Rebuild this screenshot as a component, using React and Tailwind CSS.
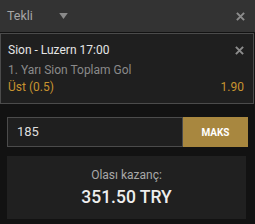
import React from 'react'

function XIcon({ className }) {
  return (
    <svg viewBox="0 0 10 10" className={className} fill="none" stroke="currentColor" strokeWidth="2.2">
      <path d="M1 1 L9 9 M9 1 L1 9" />
    </svg>
  )
}

export default function App() {
  return (
    <div className="w-[255px] h-[224px] bg-[#121212] overflow-hidden" style={{ fontFamily: 'Roboto, "Liberation Sans", sans-serif' }}>
      {/* Header */}
      <div className="h-[32px] bg-[#333333] flex items-center pl-[7px] pr-[10px]">
        <span className="text-[12.5px] text-[#a6a6a6]">Tekli</span>
        <svg viewBox="0 0 10 7" className="w-[9px] h-[6px] ml-[26px] text-[#8a8a8a]" fill="currentColor">
          <path d="M0 0 H10 L5 7 Z" />
        </svg>
        <XIcon className="w-[9px] h-[9px] ml-auto text-[#8c8c8c]" />
      </div>

      {/* Bet card */}
      <div className="mt-[1px] w-[254px] h-[71px] border border-[#4b4b4b] bg-[#1f1f1f] pl-[7px] pr-[8px] pt-[7px] flex flex-col">
        <div className="flex items-center justify-between h-[18px]">
          <span className="text-[12px] text-[#e6e6e6]">Sion - Luzern 17:00</span>
          <XIcon className="w-[9px] h-[9px] text-[#8c8c8c] mr-[1px]" />
        </div>
        <div className="text-[12px] text-[#8a8a8a] leading-[18px] mt-[2px]">1. Yarı Sion Toplam Gol</div>
        <div className="flex items-center justify-between leading-[17px] text-[12px] text-[#c8942f]">
          <span>Üst (0.5)</span>
          <span className="mr-[1px]">1.90</span>
        </div>
      </div>

      {/* Stake */}
      <div className="mt-[13px] mx-[7px] flex h-[30px]">
        <div className="flex-1 border border-[#4b4b4b] bg-[#1f1f1f] flex items-center pl-[9px] text-[13px] text-[#dddddd]">185</div>
        <button className="w-[65px] bg-[#a8873f] text-white text-[10px] font-bold flex items-center justify-center">MAKS</button>
      </div>

      {/* Potential win */}
      <div className="mt-[9px] mx-[7px] w-[239px] h-[63px] bg-[#202020] flex flex-col items-center justify-center">
        <span className="text-[12px] text-[#a8a8a8] leading-[16px]">Olası kazanç:</span>
        <span className="text-[17.5px] font-medium text-[#eeeeee] leading-[22px] mt-[3px]">351.50 TRY</span>
      </div>
    </div>
  )
}
